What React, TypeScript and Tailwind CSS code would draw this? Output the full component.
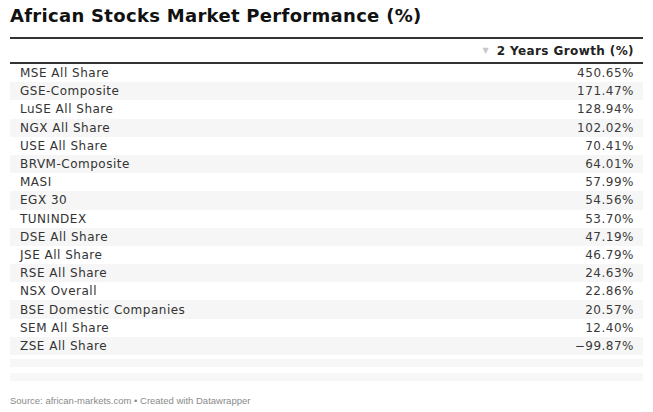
import React from "react";

const rows: [string, string][] = [
  ["MSE All Share", "450.65%"],
  ["GSE-Composite", "171.47%"],
  ["LuSE All Share", "128.94%"],
  ["NGX All Share", "102.02%"],
  ["USE All Share", "70.41%"],
  ["BRVM-Composite", "64.01%"],
  ["MASI", "57.99%"],
  ["EGX 30", "54.56%"],
  ["TUNINDEX", "53.70%"],
  ["DSE All Share", "47.19%"],
  ["JSE All Share", "46.79%"],
  ["RSE All Share", "24.63%"],
  ["NSX Overall", "22.86%"],
  ["BSE Domestic Companies", "20.57%"],
  ["SEM All Share", "12.40%"],
  ["ZSE All Share", "\u221299.87%"],
];

export default function App() {
  return (
    <div className="w-[653px] h-[412px] bg-white overflow-hidden text-[#333]" style={{ fontFamily: "'DejaVu Sans', 'Liberation Sans', sans-serif" }}>
      <div className="pl-[10px] w-[643px]">
        <div className="pt-[6px] h-[37px] text-[18px] leading-[20px] font-bold text-[#111] tracking-[0.3px]">
          African Stocks Market Performance (%)
        </div>
        <div className="border-t-2 border-[#333]" />
        <div className="h-[25px] flex items-center justify-end pr-[9px] border-b-2 border-[#333]">
          <span className="text-[#c8c8c8] text-[8px] mr-[8px] leading-none">▼</span>
          <span className="font-bold text-[12px] tracking-[0.4px] text-[#222]">2 Years Growth (%)</span>
        </div>
        {rows.map(([name, val], i) => (
          <div
            key={name}
            className={`h-[18.2px] flex items-center justify-between pl-[10px] pr-[9px] text-[12px] tracking-[0.5px] ${i % 2 === 1 ? "bg-[#f6f6f6]" : "bg-white"}`}
          >
            <span>{name}</span>
            <span className="text-[#3a3a3a]">{val}</span>
          </div>
        ))}
        <div className="h-[4px]" />
        <div className="h-[8px] bg-[#f7f7f7]" />
        <div className="h-[6px]" />
        <div className="h-[8px] bg-[#f7f7f7]" />
        <div className="pt-[13px] text-[9.5px] text-[#8a8a8a]" style={{ fontFamily: "'Liberation Sans', Arial, sans-serif" }}>
          Source: african-markets.com • Created with Datawrapper
        </div>
      </div>
    </div>
  );
}
